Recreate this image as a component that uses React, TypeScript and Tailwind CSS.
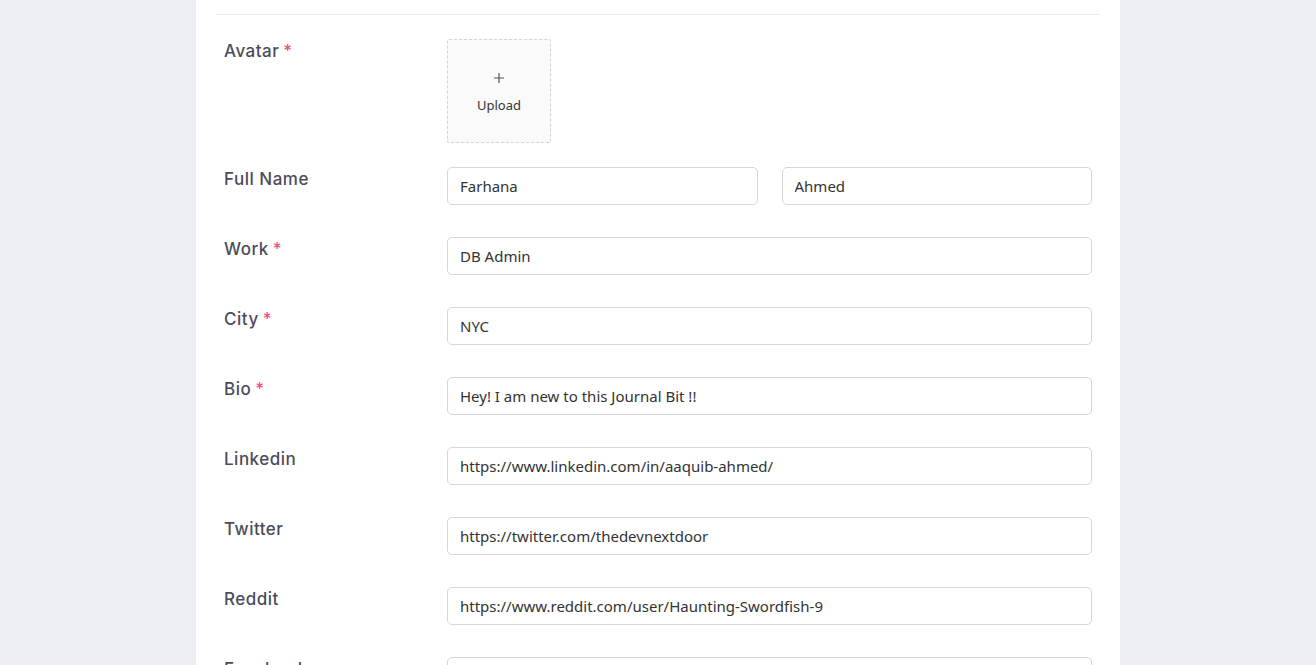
const fields: { label: string; required?: boolean; value: string }[] = [
  { label: "Work", required: true, value: "DB Admin" },
  { label: "City", required: true, value: "NYC" },
  { label: "Bio", required: true, value: "Hey! I am new to this Journal Bit !!" },
  { label: "Linkedin", value: "https://www.linkedin.com/in/aaquib-ahmed/" },
  { label: "Twitter", value: "https://twitter.com/thedevnextdoor" },
  { label: "Reddit", value: "https://www.reddit.com/user/Haunting-Swordfish-9" },
  { label: "Facebook", value: "" },
];

const labelFont = { fontFamily: "Inter, 'Noto Sans', sans-serif" };

function Label({ text, required }: { text: string; required?: boolean }) {
  return (
    <div className="w-[223px] shrink-0 text-[17px] font-medium leading-6 tracking-[0.5px] text-[#4b4c5c]" style={labelFont}>
      {text}
      {required && <span className="ml-[4px] text-[#f2527e]">*</span>}
    </div>
  );
}

function TextInput({ value }: { value: string }) {
  return (
    <input
      defaultValue={value}
      className="h-[38px] w-full rounded-[5px] border border-[#d4d6dc] bg-white px-[12px] text-[15px] text-[#333] outline-none font-['Noto_Sans',sans-serif]"
    />
  );
}

export default function App() {
  return (
    <div className="min-h-screen bg-[#eeeff4] font-['Noto_Sans',sans-serif]">
      <div className="ml-[196px] w-[924px] bg-white px-[20px] pt-[14px] pb-10">
        <div className="border-t border-[#ebebef]" />
        <div className="pl-[8px] pr-[8px] pt-[24px]">
          {/* Avatar */}
          <div className="mb-[24px] flex">
            <Label text="Avatar" required />
            <div className="flex h-[104px] w-[104px] flex-col items-center justify-center rounded-[2px] border border-dashed border-[#d3d3d8] bg-[#fafafa] text-[#333]">
              <svg width="12" height="12" viewBox="0 0 12 12" className="mt-[2px]">
                <path d="M6 1v10M1 6h10" stroke="#555" strokeWidth="1.2" fill="none" />
              </svg>
              <span className="mt-[13px] text-[13px] leading-4">Upload</span>
            </div>
          </div>

          {/* Full name */}
          <div className="mb-[32px] flex">
            <Label text="Full Name" />
            <div className="flex flex-1 gap-[24px]">
              <TextInput value="Farhana" />
              <TextInput value="Ahmed" />
            </div>
          </div>

          {fields.map((f) => (
            <div key={f.label} className="mb-[32px] flex">
              <Label text={f.label} required={f.required} />
              <div className="flex-1">
                <TextInput value={f.value} />
              </div>
            </div>
          ))}
        </div>
      </div>
    </div>
  );
}
